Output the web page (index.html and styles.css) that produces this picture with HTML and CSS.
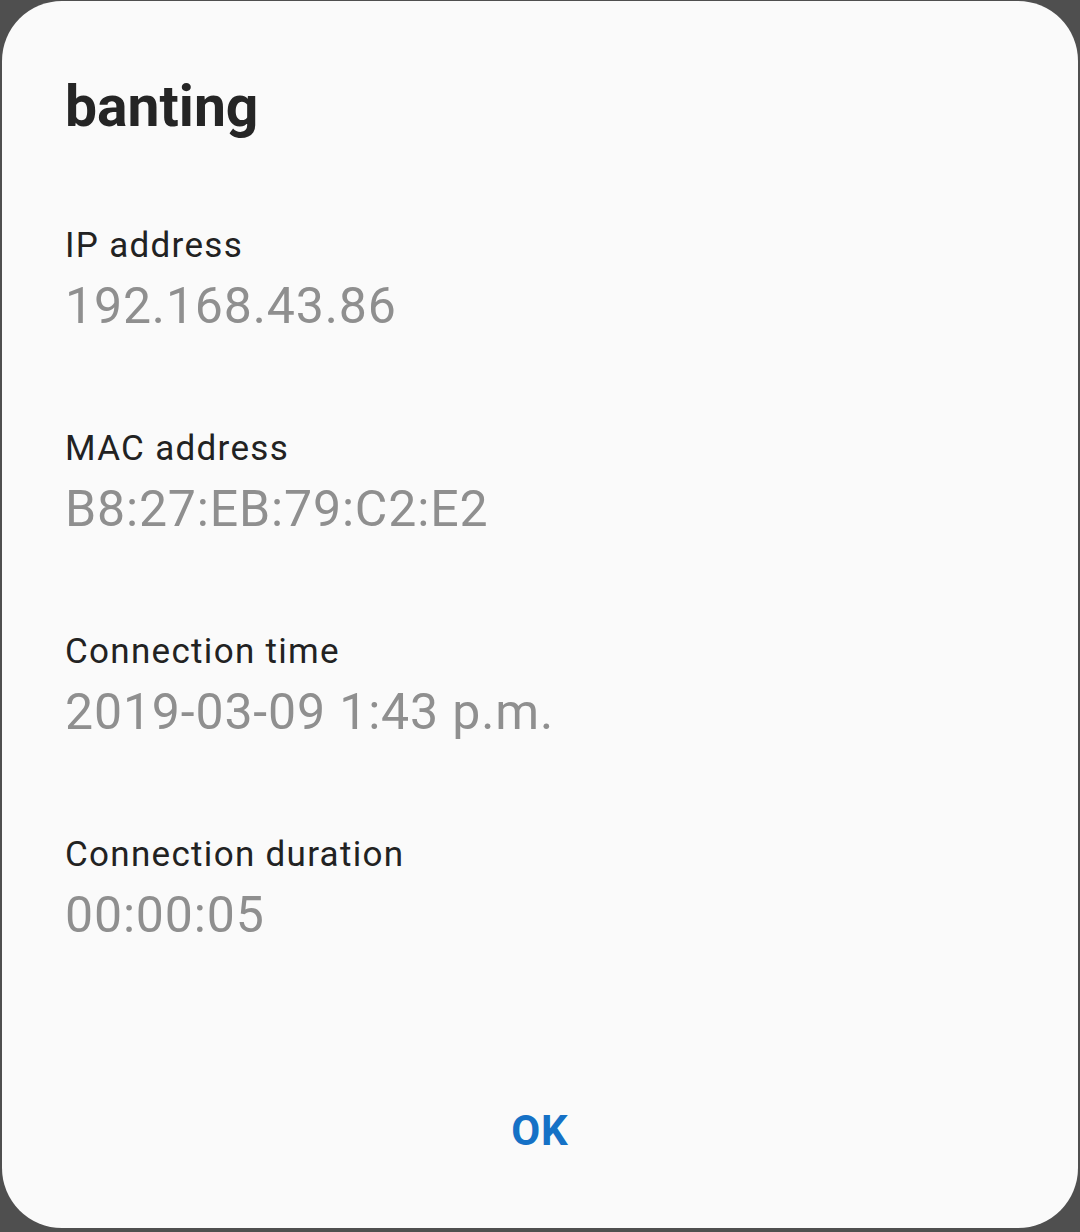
FILE: index.html
```html
<!DOCTYPE html>
<html lang="en">
<head>
<meta charset="utf-8">
<title>banting</title>
<link rel="stylesheet" href="styles.css">
</head>
<body>
<div class="dialog">
  <h1 class="title">banting</h1>
  <div class="rows">
    <div class="row">
      <div class="label">IP address</div>
      <div class="value">192.168.43.86</div>
    </div>
    <div class="row">
      <div class="label">MAC address</div>
      <div class="value">B8:27:EB:79:C2:E2</div>
    </div>
    <div class="row">
      <div class="label">Connection time</div>
      <div class="value">2019-03-09 1:43 p.m.</div>
    </div>
    <div class="row">
      <div class="label">Connection duration</div>
      <div class="value">00:00:05</div>
    </div>
  </div>
  <div class="actions">
    <button class="ok">OK</button>
  </div>
</div>
</body>
</html>
```
FILE: styles.css
```css
html, body {
  margin: 0;
  padding: 0;
}
body {
  background: #4f4f4f;
  width: 1080px;
  height: 1232px;
  padding: 1px 2px 0 2px;
  box-sizing: border-box;
  font-family: Roboto, "Noto Sans", sans-serif;
}
.dialog {
  height: 1227px;
  background: #fafafa;
  border-radius: 60px;
  padding: 0 0 0 63px;
  box-sizing: border-box;
  display: flex;
  flex-direction: column;
}
.title {
  margin: 72px 0 0 0;
  font-size: 57px;
  line-height: 68px;
  font-weight: 700;
  color: #252525;
}
.rows {
  margin-top: 85px;
  display: flex;
  flex-direction: column;
  gap: 93px;
}
.row {
  display: flex;
  flex-direction: column;
  gap: 10px;
}
.label {
  font-size: 35px;
  line-height: 40px;
  color: #222222;
  letter-spacing: 1.3px;
}
.value {
  font-size: 50px;
  line-height: 60px;
  color: #8f8f8f;
  letter-spacing: 0.85px;
}
.actions {
  margin-top: auto;
  height: 152px;
  display: flex;
  justify-content: center;
  align-items: flex-start;
  padding-right: 63px;
}
.ok {
  margin-top: 30px;
  border: none;
  background: none;
  padding: 0;
  font-family: Roboto, "Noto Sans", sans-serif;
  font-size: 42px;
  line-height: 50px;
  font-weight: 700;
  color: #1571c6;
  letter-spacing: 1px;
}
```
